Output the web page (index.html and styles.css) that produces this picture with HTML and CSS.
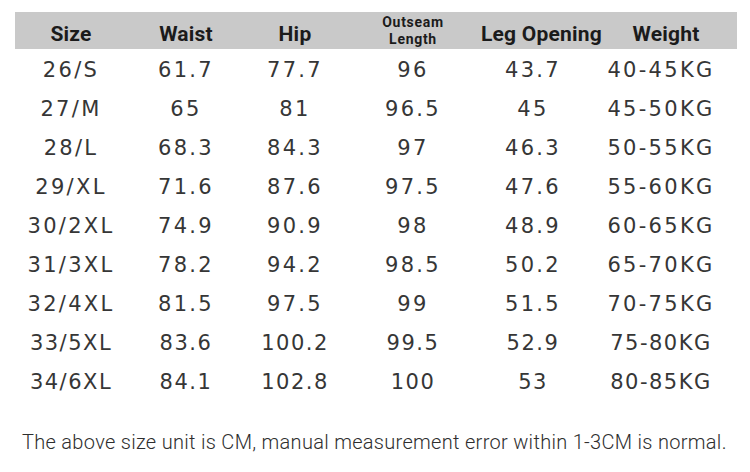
FILE: index.html
```html
<!DOCTYPE html>
<html>
<head>
<meta charset="utf-8">
<link rel="stylesheet" href="styles.css">
</head>
<body>
<div class="chart">
  <div class="row head">
    <div class="c">Size</div>
    <div class="c">Waist</div>
    <div class="c">Hip</div>
    <div class="c small"><span class="ln">Outseam</span><span class="ln">Length</span></div>
    <div class="c">Leg Opening</div>
    <div class="c w">Weight</div>
  </div>
  <div class="row"><div class="c">26/S</div><div class="c">61.7</div><div class="c">77.7</div><div class="c">96</div><div class="c">43.7</div><div class="c">40-45KG</div></div>
  <div class="row"><div class="c">27/M</div><div class="c">65</div><div class="c">81</div><div class="c">96.5</div><div class="c">45</div><div class="c">45-50KG</div></div>
  <div class="row"><div class="c">28/L</div><div class="c">68.3</div><div class="c">84.3</div><div class="c">97</div><div class="c">46.3</div><div class="c">50-55KG</div></div>
  <div class="row"><div class="c">29/XL</div><div class="c">71.6</div><div class="c">87.6</div><div class="c">97.5</div><div class="c">47.6</div><div class="c">55-60KG</div></div>
  <div class="row"><div class="c">30/2XL</div><div class="c">74.9</div><div class="c">90.9</div><div class="c">98</div><div class="c">48.9</div><div class="c">60-65KG</div></div>
  <div class="row"><div class="c">31/3XL</div><div class="c">78.2</div><div class="c">94.2</div><div class="c">98.5</div><div class="c">50.2</div><div class="c">65-70KG</div></div>
  <div class="row"><div class="c">32/4XL</div><div class="c">81.5</div><div class="c">97.5</div><div class="c">99</div><div class="c">51.5</div><div class="c">70-75KG</div></div>
  <div class="row alt"><div class="c">33/5XL</div><div class="c">83.6</div><div class="c">100.2</div><div class="c">99.5</div><div class="c">52.9</div><div class="c">75-80KG</div></div>
  <div class="row alt"><div class="c">34/6XL</div><div class="c">84.1</div><div class="c">102.8</div><div class="c">100</div><div class="c">53</div><div class="c">80-85KG</div></div>
</div>
<p class="note">The above size unit is CM, manual measurement error within 1-3CM is normal.</p>
</body>
</html>
```
FILE: styles.css
```css
html, body {
  margin: 0;
  padding: 0;
  background: #ffffff;
}
body {
  width: 750px;
  height: 472px;
  overflow: hidden;
}
.chart {
  margin: 12px 0 0 15px;
  width: 722px;
}
.row {
  display: grid;
  grid-template-columns: 112px 118px 100px 136px 104px 152px;
  height: 39px;
  align-items: center;
  font-family: "DejaVu Sans", sans-serif;
  font-size: 21px;
  letter-spacing: 2.3px;
  color: #363636;
}
.row .c {
  text-align: center;
  white-space: nowrap;
  padding-top: 2px;
}
.row.alt .c {
  letter-spacing: 1.5px;
}
.row.head {
  height: 37px;
  background: #c9c9c9;
  font-family: "Roboto", sans-serif;
  font-weight: 700;
  font-size: 21px;
  letter-spacing: 0.2px;
  color: #1b1b1b;
}
.row.head .c {
  padding-top: 6px;
}
.row.head .c.small {
  display: flex;
  flex-direction: column;
  align-items: center;
  font-size: 14px;
  line-height: 17px;
  letter-spacing: 0.7px;
  padding-top: 0;
  margin-top: 1px;
}
.row.head .c.small .ln {
  display: block;
  height: 17px;
}
.row.head .c.w {
  padding-left: 10px;
}
.note {
  margin: 30px 0 0 22px;
  font-family: "Roboto", sans-serif;
  font-weight: 300;
  font-size: 20px;
  letter-spacing: 0.3px;
  color: #2e2e2e;
  white-space: nowrap;
}
```
